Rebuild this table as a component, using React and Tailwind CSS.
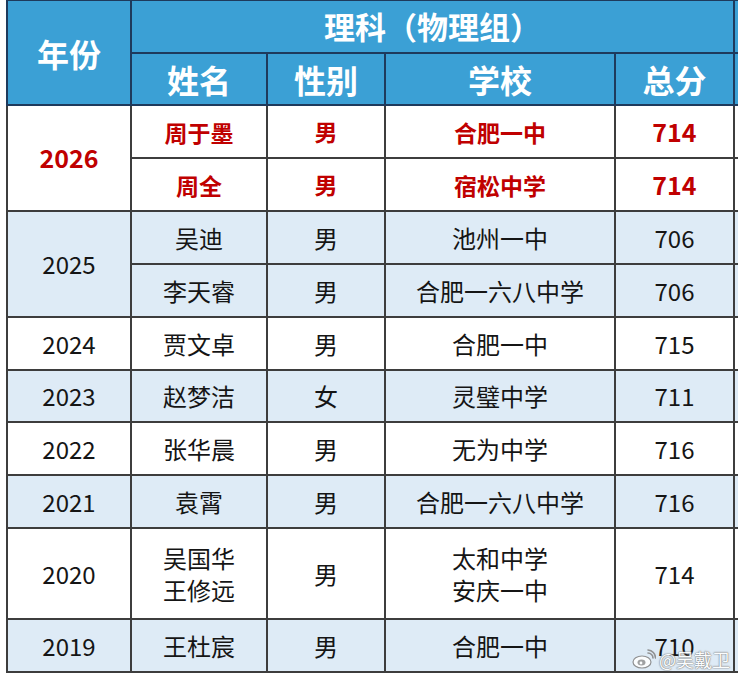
const ROWS = [
  { year: '2026', red: true, bg: 'bg-white', items: [
    { name: ['周于墨'], sex: '男', school: ['合肥一中'], score: '714' },
    { name: ['周全'], sex: '男', school: ['宿松中学'], score: '714' },
  ] },
  { year: '2025', bg: 'bg-[#deebf6]', items: [
    { name: ['吴迪'], sex: '男', school: ['池州一中'], score: '706' },
    { name: ['李天睿'], sex: '男', school: ['合肥一六八中学'], score: '706' },
  ] },
  { year: '2024', bg: 'bg-white', items: [{ name: ['贾文卓'], sex: '男', school: ['合肥一中'], score: '715' }] },
  { year: '2023', bg: 'bg-[#deebf6]', short: true, items: [{ name: ['赵梦洁'], sex: '女', school: ['灵璧中学'], score: '711' }] },
  { year: '2022', bg: 'bg-white', items: [{ name: ['张华晨'], sex: '男', school: ['无为中学'], score: '716' }] },
  { year: '2021', bg: 'bg-[#deebf6]', items: [{ name: ['袁霄'], sex: '男', school: ['合肥一六八中学'], score: '716' }] },
  { year: '2020', bg: 'bg-white', tall: true, items: [
    { name: ['吴国华', '王修远'], sex: '男', school: ['太和中学', '安庆一中'], score: '714' },
  ] },
  { year: '2019', bg: 'bg-[#deebf6]', items: [{ name: ['王杜宸'], sex: '男', school: ['合肥一中'], score: '710' }] },
]

const cell = 'border-2 border-[#3d3d3d] text-center align-middle p-0'
const head = 'border-2 border-[#1e3a5c] text-center align-middle p-0 text-white font-bold'

function Lines({ lines }) {
  return lines.map((l, i) => <div key={i} className="leading-[32px]">{l}</div>)
}

export default function App() {
  return (
    <div className="w-[738px] h-[680px] bg-white overflow-hidden relative" style={{ fontFamily: '"Noto Sans CJK SC", "Noto Sans", sans-serif' }}>
      <table className="border-collapse ml-[6px] -mt-[1px] table-fixed w-[780px] text-[#151515] text-[24px]">
        <colgroup>
          <col className="w-[124px]" />
          <col className="w-[136px]" />
          <col className="w-[118px]" />
          <col className="w-[230px]" />
          <col className="w-[119px]" />
          <col className="w-[53px]" />
        </colgroup>
        <thead className="bg-[#3ba0d5]">
          <tr className="h-[53px]">
            <th rowSpan={2} className={`${head} text-[32px]`}>年份</th>
            <th colSpan={4} className={`${head} text-[31px]`}>理科（物理组）</th>
            <th className={head}></th>
          </tr>
          <tr className="h-[52px]">
            <th className={`${head} text-[32px]`}>姓名</th>
            <th className={`${head} text-[32px]`}>性别</th>
            <th className={`${head} text-[32px]`}>学校</th>
            <th className={`${head} text-[32px]`}>总分</th>
            <th className={head}></th>
          </tr>
        </thead>
        <tbody>
          {ROWS.map(row => row.items.map((it, i) => (
            <tr key={row.year + i} className={`${row.bg} ${row.tall ? 'h-[91px]' : row.short ? 'h-[52px]' : 'h-[53px]'} ${row.red ? 'text-[#c00000] font-bold text-[23px]' : ''}`}>
              {i === 0 && (
                <td rowSpan={row.items.length} className={`${cell} ${row.red ? 'text-[25px]' : 'text-[24px]'}`}>{row.year}</td>
              )}
              <td className={cell}><Lines lines={it.name} /></td>
              <td className={cell}>{it.sex}</td>
              <td className={cell}><Lines lines={it.school} /></td>
              <td className={`${cell} ${row.red ? 'text-[25px]' : 'text-[24px]'}`}>{it.score}</td>
              <td className={cell}></td>
            </tr>
          )))}
        </tbody>
      </table>

      <div className="absolute left-[632px] top-[649px] flex items-center gap-[3px] text-white text-[18px] leading-none opacity-90" style={{ textShadow: '0 0 1px #777, 0 0 1px #777, 0 0 2px #999' }}>
        <svg width="24" height="20" viewBox="0 0 24 20">
          <ellipse cx="10" cy="13" rx="9" ry="6" fill="#fff" stroke="#888" strokeWidth="1.2" />
          <ellipse cx="9.5" cy="13.5" rx="4" ry="3" fill="#999" />
          <circle cx="9" cy="14" r="1.4" fill="#fff" />
          <path d="M16 4 A5 5 0 0 1 21 9" fill="none" stroke="#888" strokeWidth="1.6" strokeLinecap="round" />
          <path d="M16 1 A8 8 0 0 1 23.5 9" fill="none" stroke="#888" strokeWidth="1.6" strokeLinecap="round" />
        </svg>
        <span>@吴戴卫</span>
      </div>
    </div>
  )
}
